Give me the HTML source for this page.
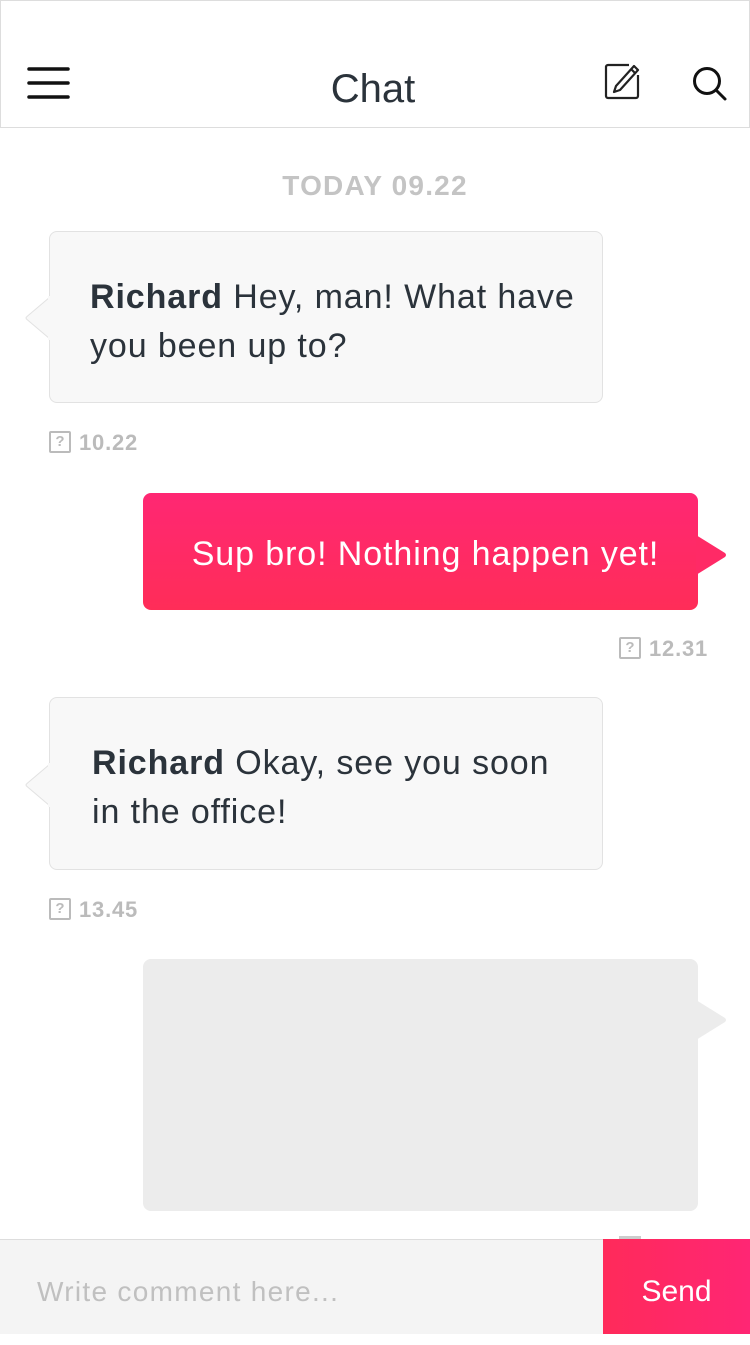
<!DOCTYPE html>
<html><head><meta charset="utf-8"><style>
*{margin:0;padding:0;box-sizing:border-box}
body{width:750px;height:1334px;position:relative;background:#fff;font-family:"Liberation Sans",sans-serif;overflow:hidden}
.hdr{position:absolute;left:0;top:0;width:750px;height:128px;border:1px solid #ddd;background:#fff}
.title{position:absolute;left:0;width:750px;top:66px;text-align:center;font-size:40px;color:#2b333b;font-weight:300;padding-left:-4px}
.b{position:absolute;border-radius:8px}
.l{background:#f8f8f8;border:1px solid #e2e2e2}
.txt{position:absolute;font-size:34px;line-height:49px;color:#2b333b;letter-spacing:0.9px;white-space:nowrap}
.tm{position:absolute;font-size:22px;color:#bbb;font-weight:bold;height:24px;line-height:24px;letter-spacing:0.8px}
.ic{display:inline-block;width:22px;height:22px;border:2px solid #bbb;border-radius:2px;font-size:15px;line-height:18px;text-align:center;vertical-align:top;margin-right:8px;font-weight:bold;letter-spacing:0}
</style></head><body>
<div class="hdr">
<svg style="position:absolute;left:26px;top:66px" width="44" height="34"><g stroke="#111" stroke-width="3.5" stroke-linecap="round"><line x1="2" y1="2" x2="41" y2="2"/><line x1="2" y1="16" x2="41" y2="16"/><line x1="2" y1="30" x2="41" y2="30"/></g></svg>
<div class="title" style="left:-3px">Chat</div>
<svg style="position:absolute;left:602px;top:62px" width="40" height="38" fill="none" stroke="#222" stroke-width="2.2"><path d="M26 2H5a2 2 0 0 0-2 2v29a2 2 0 0 0 2 2h28a2 2 0 0 0 2-2V12"/><path d="M31 3l4 4L17 27l-6 2 2-6z" stroke-linejoin="round"/><line x1="28" y1="6" x2="32" y2="10"/></svg>
<svg style="position:absolute;left:690px;top:64px" width="38" height="38" fill="none" stroke="#111" stroke-width="3"><circle cx="16" cy="16" r="12.5"/><line x1="25" y1="25" x2="34" y2="34" stroke-linecap="round"/></svg>
</div>
<div style="position:absolute;top:170px;width:750px;text-align:center;font-size:28px;color:#c4c4c4;font-weight:bold;letter-spacing:1.2px">TODAY 09.22</div>

<svg style="position:absolute;left:24px;top:296px" width="28" height="44"><path d="M26 1L3 20.5Q1 22 3 23.5L26 43" fill="#f8f8f8" stroke="#e2e2e2"/></svg>
<div class="b l" style="left:49px;top:231px;width:554px;height:172px"></div>
<svg style="position:absolute;left:48px;top:296px" width="4" height="44"><rect width="4" height="44" fill="#f8f8f8"/></svg>
<div class="txt" style="left:90px;top:273px"><b>Richard</b> Hey, man! What have<br>you been up to?</div>
<div class="tm" style="left:49px;top:431px"><span class="ic">?</span>10.22</div>

<div class="b" style="left:143px;top:493px;width:555px;height:117px;background:linear-gradient(#ff2773,#ff2d58)"></div>
<svg style="position:absolute;left:696px;top:535px" width="32" height="40"><path d="M0 0L29 18Q31 20 29 22L0 40z" fill="#ff2a66"/></svg>
<div class="txt" style="left:143px;width:565px;text-align:center;top:530px;color:#fff">Sup bro! Nothing happen yet!</div>
<div class="tm" style="left:619px;top:637px"><span class="ic">?</span>12.31</div>

<svg style="position:absolute;left:24px;top:763px" width="28" height="44"><path d="M26 1L3 20.5Q1 22 3 23.5L26 43" fill="#f8f8f8" stroke="#e2e2e2"/></svg>
<div class="b l" style="left:49px;top:697px;width:554px;height:173px"></div>
<svg style="position:absolute;left:48px;top:763px" width="4" height="44"><rect width="4" height="44" fill="#f8f8f8"/></svg>
<div class="txt" style="left:92px;top:739px"><b>Richard</b> Okay, see you soon<br>in the office!</div>
<div class="tm" style="left:49px;top:898px"><span class="ic">?</span>13.45</div>

<div class="b" style="left:143px;top:959px;width:555px;height:252px;background:#ececec"></div>
<svg style="position:absolute;left:696px;top:1000px" width="32" height="40"><path d="M0 0L29 18Q31 20 29 22L0 40z" fill="#ececec"/></svg>
<div style="position:absolute;left:619px;top:1236px;width:22px;height:4px;background:#ccc"></div>

<div style="position:absolute;left:0;top:1239px;width:603px;height:95px;background:#f4f4f4;border-top:1px solid #ddd"></div>
<div style="position:absolute;left:37px;top:1276px;font-size:28px;color:#c0c0c0;letter-spacing:1.3px">Write comment here...</div>
<div style="position:absolute;left:603px;top:1239px;width:147px;height:95px;background:linear-gradient(90deg,#ff2a5a,#ff2674);color:#fff;font-size:30px;text-align:center;line-height:106px">Send</div>
</body></html>
